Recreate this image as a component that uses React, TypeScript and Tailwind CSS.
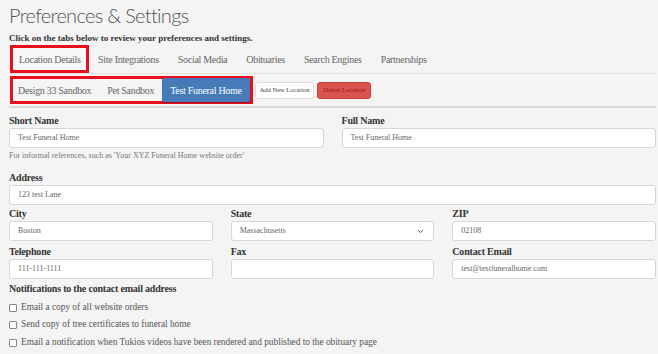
import { ChevronDown } from 'lucide-react';

const serif = "font-['Liberation_Serif',serif]";

const Field = ({ label, value, select }: { label: string; value: string; select?: boolean }) => (
  <div className="flex flex-col">
    <label className="text-[10px] font-bold tracking-[-0.2px] text-[#333] leading-[12px] mb-[1px]">{label}</label>
    <div className="h-[20px] bg-white border border-[#d6d6d6] rounded-[3px] flex items-center justify-between px-[8px] text-[8px] text-[#666]">
      <span>{value}</span>
      {select && <ChevronDown className="w-[9px] h-[9px] text-[#555]" strokeWidth={2.5} />}
    </div>
  </div>
);

const Check = ({ children }: { children: React.ReactNode }) => (
  <div className="flex items-center gap-[4px] h-[17.5px] text-[9.3px] text-[#555]">
    <span className="w-[8px] h-[8px] border border-[#888] rounded-[1px] bg-white" />
    <span>{children}</span>
  </div>
);

export default function App() {
  const tabs = ['Site Integrations', 'Social Media', 'Obituaries', 'Search Engines', 'Partnerships'];
  return (
    <div className={`w-[658px] h-[354px] overflow-hidden bg-[#f4f4f4] ${serif}`}>
      <div className="pl-[9px] pr-[2px]">
        <h1 className="font-['Lato',sans-serif] font-light text-[20px] tracking-[-0.7px] text-[#555] leading-[24px] pt-[3px]">
          Preferences &amp; Settings
        </h1>
        <p className="text-[9px] font-bold text-[#333] mt-[5px] leading-[12px]">
          Click on the tabs below to review your preferences and settings.
        </p>

        {/* tabs */}
        <div className="flex items-end border-b border-[#e2e2e2] h-[28px] mt-[2px] text-[10px] tracking-[-0.3px] text-[#666]">
          <div className="h-[28px] flex items-center pl-[6px] pr-[5px] ml-[1px] border-[3px] border-[#e8101e] bg-[#f7f7f7]">
            Location Details
          </div>
          {tabs.map((t) => (
            <div key={t} className="h-[27px] flex items-center px-[9.5px]">
              {t}
            </div>
          ))}
        </div>

        {/* locations */}
        <div className="flex items-center h-[34px] border-b-[2px] border-[#dadada] text-[10px] tracking-[-0.3px]">
          <div className="flex items-center border-[3px] border-[#e8101e] h-[28px] ml-[1px] pl-[5px] pr-[0px]">
            <div className="pr-[8px] text-[#666]">Design 33 Sandbox</div>
            <div className="pl-[8px] pr-[8px] text-[#666]">Pet Sandbox</div>
            <div className="h-[24px] flex items-center px-[8px] bg-[#467ab8] rounded-[2px] text-white shadow-[0_1px_1px_rgba(0,0,0,0.3)]">
              Test Funeral Home
            </div>
          </div>
          <div className="ml-[2px] h-[17px] flex items-center px-[4px] bg-white border border-[#ddd] rounded-[3px] text-[6.5px] tracking-normal text-[#444]">
            Add New Location
          </div>
          <div className="ml-[3px] h-[17px] flex items-center px-[5px] bg-[#d9534f] border border-[#c9403c] rounded-[3px] text-[6.5px] tracking-normal text-[#8a1a17]">
            Delete Location
          </div>
        </div>

        {/* form */}
        <div className="mt-[7px]">
          <div className="grid grid-cols-2 gap-x-[18px]">
            <Field label="Short Name" value="Test Funeral Home" />
            <Field label="Full Name" value="Test Funeral Home" />
          </div>
          <p className="text-[8px] text-[#777] mt-[3px] leading-[10px]">
            For informal references, such as 'Your XYZ Funeral Home website order'
          </p>
          <div className="mt-[11px]">
            <Field label="Address" value="123 test Lane" />
          </div>
          <div className="grid grid-cols-3 gap-x-[18px] mt-[3px]">
            <Field label="City" value="Boston" />
            <Field label="State" value="Massachusetts" select />
            <Field label="ZIP" value="02108" />
          </div>
          <div className="grid grid-cols-3 gap-x-[18px] mt-[5px]">
            <Field label="Telephone" value="111-111-1111" />
            <Field label="Fax" value="" />
            <Field label="Contact Email" value="test@testfuneralhome.com" />
          </div>
          <div className="text-[10px] font-bold tracking-[-0.2px] text-[#333] mt-[4px] leading-[12px]">
            Notifications to the contact email address
          </div>
          <div className="mt-[4px] border-b-[2px] border-[#d6d6d6] pb-[2px]">
            <Check>Email a copy of all website orders</Check>
            <Check>Send copy of tree certificates to funeral home</Check>
            <Check>Email a notification when Tukios videos have been rendered and published to the obituary page</Check>
          </div>
        </div>
      </div>
    </div>
  );
}
